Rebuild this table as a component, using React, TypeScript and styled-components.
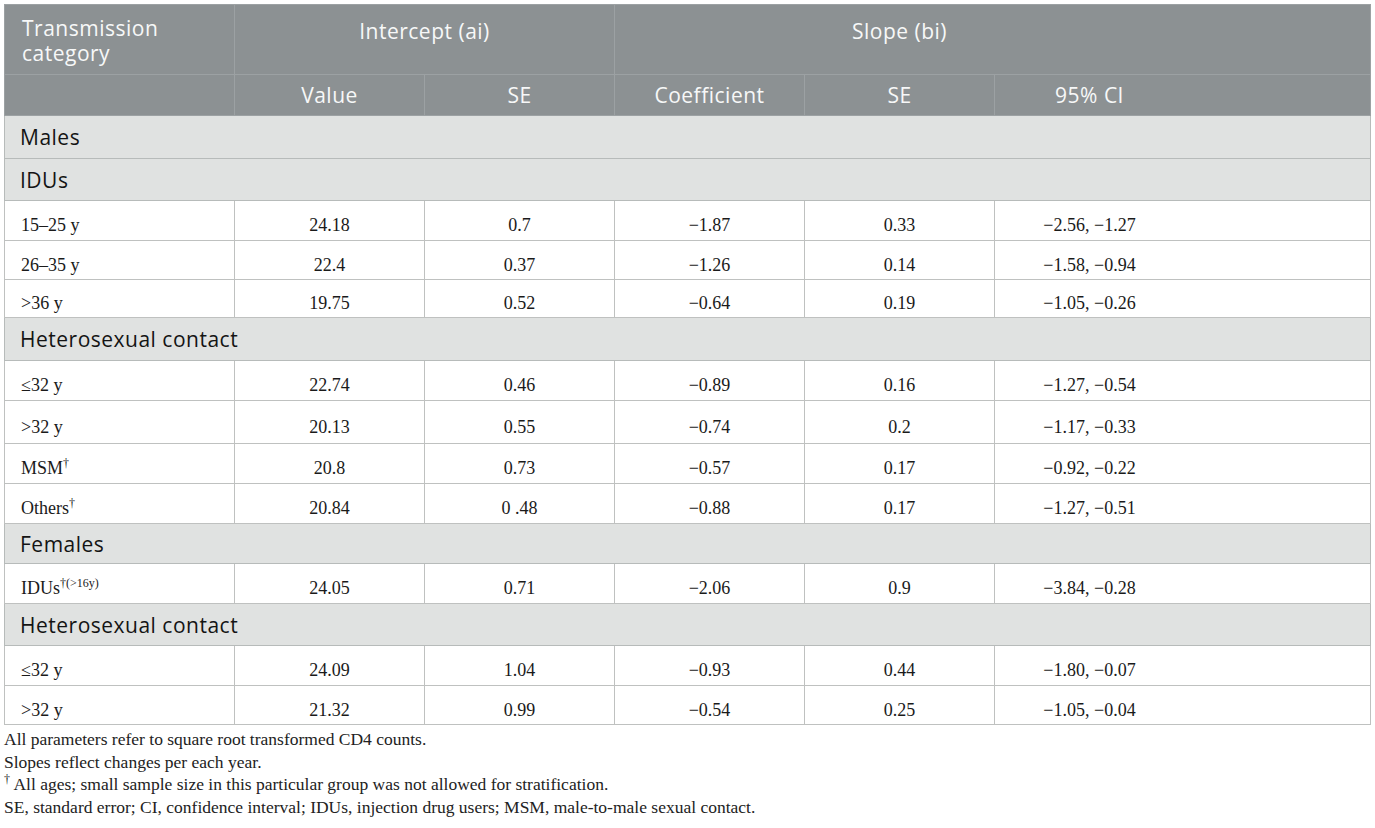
import styled, { createGlobalStyle } from 'styled-components';

const GlobalStyle = createGlobalStyle`
    html, body { margin: 0; padding: 0; background: #ffffff; }
`

const Page = styled.div`
    padding: 4px 0 0 4px;
    width: 1371px;
    box-sizing: border-box;
`

const Table = styled.table`
    width: 1366px;
    table-layout: fixed;
    border-collapse: collapse;
    border: 1.5px solid #b4b9b7;
`

const Col = styled.col<{ $w: number }>`
    width: ${p => p.$w}px;
`

const Row = styled.tr<{ $h: number }>`
    height: ${p => p.$h}px;
`

const HeadCell = styled.th<{ $left?: boolean; $top?: boolean; $wide?: boolean }>`
    background: #8c9193;
    color: #f7f8f8;
    font-family: "Open Sans", "Liberation Sans", sans-serif;
    font-weight: 400;
    font-size: 21px;
    line-height: 25px;
    letter-spacing: 0.5px;
    border: 1px solid #9ca1a3;
    text-align: ${p => (p.$left ? 'left' : 'center')};
    vertical-align: ${p => (p.$left || p.$top ? 'top' : 'middle')};
    padding: ${p => (p.$left ? '11px 0 0 17px' : p.$top ? '14px 0 0 0' : '0')};
    padding-right: ${p => (p.$wide ? '186px' : '0')};
`

const SectionCell = styled.td`
    background: #e0e2e1;
    color: #141414;
    font-family: "Open Sans", "Liberation Sans", sans-serif;
    font-size: 21px;
    letter-spacing: 0.5px;
    padding: 0 0 0 15px;
    border: 1.5px solid #b7bbba;
    vertical-align: middle;
`

const DataCell = styled.td<{ $wide?: boolean }>`
    font-family: "Liberation Serif", "Times New Roman", serif;
    font-size: 18px;
    color: #1a1a1a;
    text-align: center;
    padding: 10px ${p => (p.$wide ? '186px' : '0')} 0 0;
    border: 1px solid #bfc1c0;
    vertical-align: middle;
`

const LabelCell = styled(DataCell)`
    text-align: left;
    padding-left: 16px;
`

const Sup = styled.sup`
    font-size: 12px;
    line-height: 0;
    vertical-align: 0;
    position: relative;
    top: -7px;
`

const Notes = styled.div`
    margin-top: 3px;
    font-family: "Liberation Serif", "Times New Roman", serif;
    font-size: 17.5px;
    color: #222;
    p { margin: 0; line-height: 22.7px; }
`

type RowData =
    | { kind: 'section'; label: string; h: number }
    | { kind: 'data'; label: React.ReactNode; h: number; cells: string[] }

const rows: RowData[] = [
    { kind: 'section', label: 'Males', h: 43 },
    { kind: 'section', label: 'IDUs', h: 42 },
    { kind: 'data', label: '15–25 y', h: 40, cells: ['24.18', '0.7', '−1.87', '0.33', '−2.56, −1.27'] },
    { kind: 'data', label: '26–35 y', h: 39, cells: ['22.4', '0.37', '−1.26', '0.14', '−1.58, −0.94'] },
    { kind: 'data', label: '>36 y', h: 38, cells: ['19.75', '0.52', '−0.64', '0.19', '−1.05, −0.26'] },
    { kind: 'section', label: 'Heterosexual contact', h: 43 },
    { kind: 'data', label: '≤32 y', h: 40, cells: ['22.74', '0.46', '−0.89', '0.16', '−1.27, −0.54'] },
    { kind: 'data', label: '>32 y', h: 43, cells: ['20.13', '0.55', '−0.74', '0.2', '−1.17, −0.33'] },
    { kind: 'data', label: <>MSM<Sup>†</Sup></>, h: 40, cells: ['20.8', '0.73', '−0.57', '0.17', '−0.92, −0.22'] },
    { kind: 'data', label: <>Others<Sup>†</Sup></>, h: 40, cells: ['20.84', '0 .48', '−0.88', '0.17', '−1.27, −0.51'] },
    { kind: 'section', label: 'Females', h: 40 },
    { kind: 'data', label: <>IDUs<Sup>†(&gt;16y)</Sup></>, h: 40, cells: ['24.05', '0.71', '−2.06', '0.9', '−3.84, −0.28'] },
    { kind: 'section', label: 'Heterosexual contact', h: 42 },
    { kind: 'data', label: '≤32 y', h: 40, cells: ['24.09', '1.04', '−0.93', '0.44', '−1.80, −0.07'] },
    { kind: 'data', label: '>32 y', h: 39, cells: ['21.32', '0.99', '−0.54', '0.25', '−1.05, −0.04'] },
]

const widths = [230, 190, 190, 190, 190, 376]

export default function App() {
    return (
        <Page>
            <GlobalStyle />
            <Table>
                <colgroup>
                    {widths.map((w, i) => <Col key={i} $w={w} />)}
                </colgroup>
                <thead>
                    <Row $h={70}>
                        <HeadCell $left>Transmission<br />category</HeadCell>
                        <HeadCell colSpan={2} $top>Intercept (ai)</HeadCell>
                        <HeadCell colSpan={3} $top $wide>Slope (bi)</HeadCell>
                    </Row>
                    <Row $h={41}>
                        <HeadCell />
                        <HeadCell>Value</HeadCell>
                        <HeadCell>SE</HeadCell>
                        <HeadCell>Coefficient</HeadCell>
                        <HeadCell>SE</HeadCell>
                        <HeadCell $wide>95% CI</HeadCell>
                    </Row>
                </thead>
                <tbody>
                    {rows.map((r, i) =>
                        r.kind === 'section' ? (
                            <Row key={i} $h={r.h}>
                                <SectionCell colSpan={6}>{r.label}</SectionCell>
                            </Row>
                        ) : (
                            <Row key={i} $h={r.h}>
                                <LabelCell>{r.label}</LabelCell>
                                {r.cells.map((c, j) => (
                                    <DataCell key={j} $wide={j === 4}>{c}</DataCell>
                                ))}
                            </Row>
                        )
                    )}
                </tbody>
            </Table>
            <Notes>
                <p>All parameters refer to square root transformed CD4 counts.</p>
                <p>Slopes reflect changes per each year.</p>
                <p><Sup>†</Sup> All ages; small sample size in this particular group was not allowed for stratification.</p>
                <p>SE, standard error; CI, confidence interval; IDUs, injection drug users; MSM, male-to-male sexual contact.</p>
            </Notes>
        </Page>
    )
}
